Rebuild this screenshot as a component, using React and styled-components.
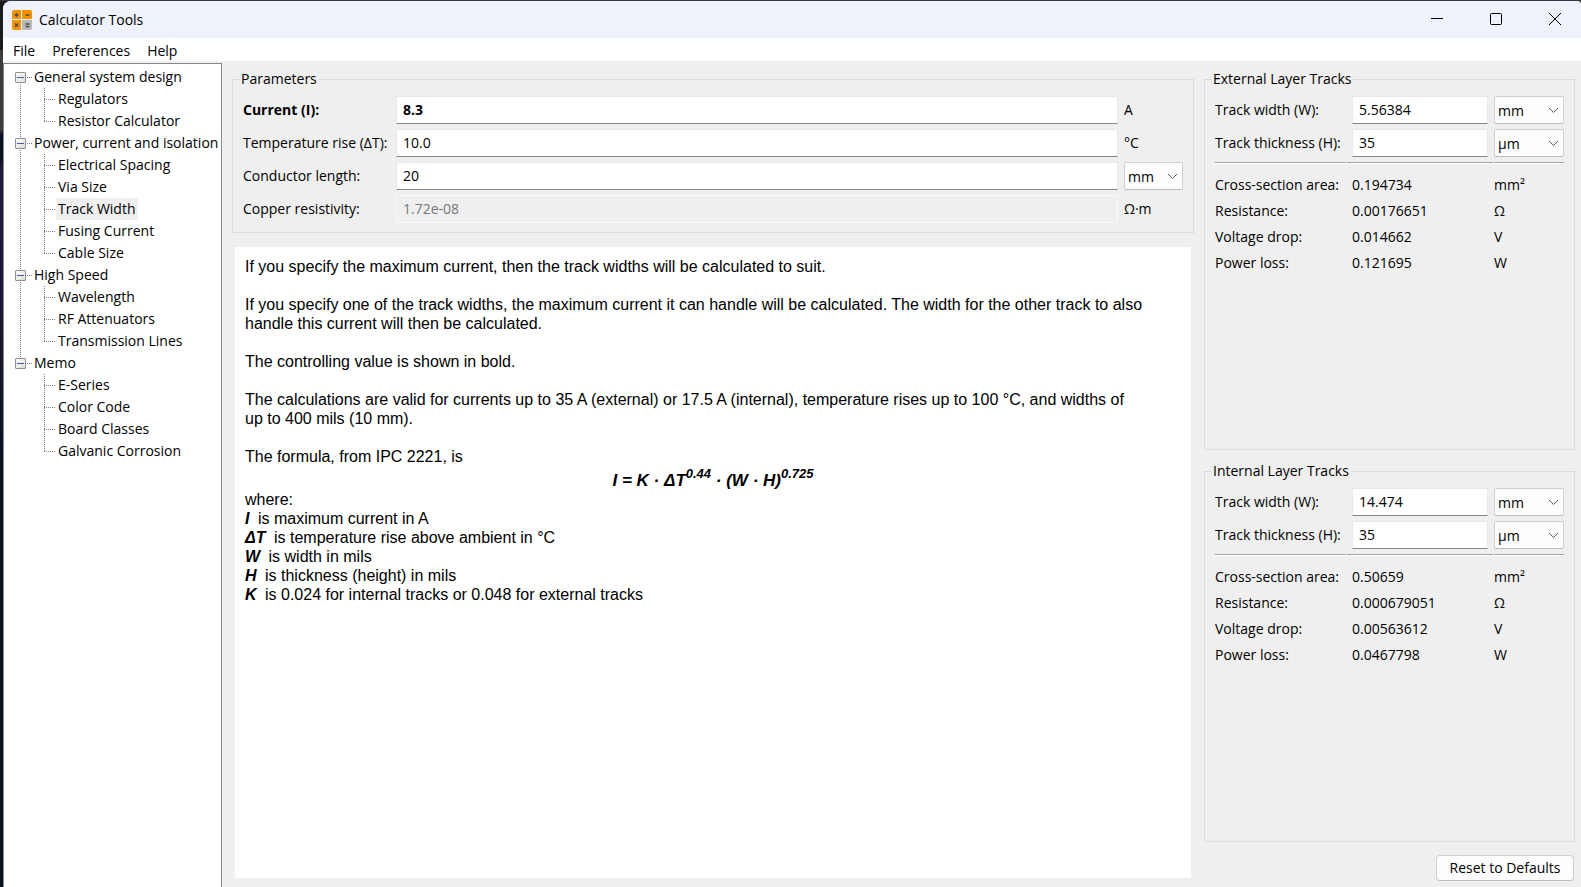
import React from "react";
import styled, { createGlobalStyle, css } from "styled-components";

const GlobalStyle = createGlobalStyle`
  *, *::before, *::after { box-sizing: border-box; }
  body { margin: 0; background: #1c1930; }
  body, input, select, button {
    font-family: "Open Sans", "Noto Sans", sans-serif;
    font-size: 14px;
    line-height: 20px;
    color: #000;
  }
`;

const Desktop = styled.div`
  min-height: 100vh;
  display: flex;
  padding: 1px 0 0 3px;
  background:
    linear-gradient(#3a373b, #3a373b) 0 0 / 100% 1px no-repeat,
    linear-gradient(#1b1b1d 0 50px, #3d3a3a 50px 130px, #0d1220 134px 160px, #211a3c 170px, #1d1836 300px, #0b1220 460px, #0b1220 100%);
`;

const Window = styled.div`
  flex: 1;
  min-width: 0;
  display: flex;
  flex-direction: column;
  background: #efefef;
  border-radius: 8px 4px 0 0;
  overflow: hidden;
`;

const TitleBar = styled.header`
  height: 37px;
  display: flex;
  align-items: center;
  background: #eff2fb;
  padding-left: 9px;
`;

const Title = styled.h1`
  flex: 1;
  margin: 0 0 0 7px;
  font-size: 14px;
  font-weight: 400;
`;

const CaptionButton = styled.button`
  width: 59px;
  height: 37px;
  padding: 0 0 2px;
  border: 0;
  background: transparent;
  display: grid;
  place-items: center;
`;

const CaptionButtons = styled.div`
  display: flex;
  margin-right: -3px;
`;

const MenuBar = styled.nav`
  height: 23px;
  display: flex;
  align-items: center;
  gap: 17px;
  padding: 2px 10px 0;
  margin-bottom: 2px;
  background: #fff;
`;

const MenuItem = styled.button`
  padding: 0;
  border: 0;
  background: transparent;
`;

const Workspace = styled.main`
  flex: 1;
  display: flex;
  gap: 10px;
  padding-right: 6px;
`;

const dots = (angle) =>
  css`repeating-linear-gradient(${angle}, #7d7d7d 0 1px, transparent 1px 2px)`;

const Tree = styled.nav`
  width: 219px;
  flex: none;
  padding-top: 2px;
  background: #fff;
  border: 1px solid #828790;
  border-bottom: 0;
  white-space: nowrap;
`;

const TreeList = styled.ul`
  list-style: none;
  margin: 0;
  padding: 0;
`;

const TreeGroup = styled.li`
  background: ${dots("180deg")} 16px 0 / 1px 100% no-repeat;
  &:first-child { background-position: 16px 12px; }
  &:last-child { background-size: 1px 12px; }
`;

const GroupRow = styled.div`
  height: 22px;
  display: flex;
  align-items: center;
  padding-left: 11px;
`;

const Toggle = styled.button`
  width: 11px;
  height: 11px;
  padding: 0;
  display: grid;
  place-items: center;
  border: 1px solid #919191;
  border-radius: 1px;
  background: linear-gradient(135deg, #fff, #dcdcdc);
  &::before {
    content: "";
    width: 7px;
    height: 1px;
    background: #3f5fa8;
  }
`;

const GroupStem = styled.span`
  width: 6px;
  height: 1px;
  margin-left: 1px;
  background: ${dots("90deg")};
`;

const GroupLabel = styled.span`
  padding-left: 1px;
`;

const TreeLeaf = styled.li`
  height: 22px;
  padding-left: 52px;
  background:
    ${dots("180deg")} 40px 0 / 1px 100% no-repeat,
    ${dots("90deg")} 40px 11px / 12px 1px no-repeat;
  &:last-child {
    background-size: 1px 12px, 12px 1px;
  }
`;

const TreeLink = styled.a`
  display: inline-block;
  padding: 0 2px;
  line-height: 22px;
  color: #000;
  text-decoration: none;
  background: ${(p) => (p.$selected ? "#efefef" : "transparent")};
`;

const Center = styled.section`
  flex: 1;
  min-width: 0;
  display: flex;
  flex-direction: column;
  gap: 14px;
  padding: 6px 0 9px;
`;

const Side = styled.aside`
  width: 371px;
  flex: none;
  display: flex;
  flex-direction: column;
  gap: 11px;
  padding: 6px 0;
`;

const Group = styled.fieldset`
  flex: ${(p) => (p.$grow ? 1 : "none")};
  min-width: 0;
  margin: 0;
  padding: 7px 10px 9px;
  border: 1px solid #dcdcdc;
`;

const GroupTitle = styled.legend`
  margin-left: -4px;
  padding: 0 2px;
`;

const FieldGrid = styled.div`
  display: grid;
  grid-template-columns: ${(p) => p.$columns};
  grid-auto-rows: 28px;
  gap: 5px 6px;
  align-items: center;
`;

const FieldLabel = styled.label`
  white-space: nowrap;
  font-weight: ${(p) => (p.$bold ? 700 : 400)};
`;

const TextField = styled.input`
  width: 100%;
  min-width: 0;
  height: 28px;
  padding: 0 6px 2px;
  outline: 0;
  background: #fff;
  border: 1px solid #e8e8e8;
  border-bottom-color: #868686;
  border-radius: 1px;
  font-weight: ${(p) => (p.$bold ? 700 : 400)};
  &:disabled {
    background: #efefef;
    color: #787878;
    border-color: #f9f9f9;
  }
`;

const SelectBox = styled.div`
  display: grid;
  align-items: center;
  & > * { grid-area: 1 / 1; }
  & > svg { justify-self: end; margin-right: 5px; pointer-events: none; }
`;

const UnitSelect = styled.select`
  appearance: none;
  width: 100%;
  height: 28px;
  padding: 2px 3px 0;
  background: #fdfdfd;
  border: 1px solid #d0d0d0;
  border-bottom-color: #bcbcbc;
  border-radius: 2px;
`;

const Rule = styled.div`
  display: grid;
  grid-template-columns: 131px 146px 1fr;
  gap: 1px;
  margin: 5px 0 8px;
`;

const RuleSegment = styled.span`
  height: 2px;
  background: #a0a0a0;
  border-bottom: 1px solid #fff;
`;

const Results = styled.table`
  width: 100%;
  table-layout: fixed;
  border-collapse: collapse;
`;

const NameCell = styled.th`
  width: 137px;
  height: 26px;
  padding: 0;
  font-weight: 400;
  text-align: left;
  white-space: nowrap;
`;

const ValueCell = styled.td`
  width: 142px;
  padding: 0;
`;

const UnitCell = styled.td`
  padding: 0;
`;

const ResetButton = styled.button`
  align-self: flex-end;
  width: 138px;
  height: 26px;
  margin: 2px 1px 0 0;
  padding: 0;
  white-space: nowrap;
  background: #fdfdfd;
  border: 1px solid #d0d0d0;
  border-bottom-color: #bcbcbc;
  border-radius: 4px;
`;

const Help = styled.article`
  flex: 1;
  margin: 0 3px;
  padding: 10px;
  background: #fff;
  font-family: "Liberation Sans", Arial, sans-serif;
  font-size: 16px;
  line-height: 19px;
`;

const Paragraph = styled.p`
  margin: 0 0 ${(p) => (p.$tight ? 0 : "19px")};
  padding-right: 20px;
`;

const Formula = styled.p`
  margin: 0;
  height: 24px;
  font-size: 17px;
  line-height: 29px;
  text-align: center;
  font-weight: 700;
  font-style: italic;
  sup { font-size: 13px; line-height: 0; vertical-align: 8px; }
`;

const Term = styled.strong`
  font-style: italic;
  margin-right: 4px;
`;

const AppIcon = () => (
  <svg width="20" height="20" viewBox="0 0 20 20" aria-hidden="true">
    <path d="M2 0h7v9H0V2a2 2 0 0 1 2-2z" fill="#f39200" />
    <path d="M10 0h8a2 2 0 0 1 2 2v7H10z" fill="#f39200" />
    <path d="M0 10h9v10H2a2 2 0 0 1-2-2z" fill="#f39200" />
    <path d="M10 10h10v8a2 2 0 0 1-2 2h-8z" fill="#b9b9b9" />
    <path d="M2.500 5h4M4.500 3v4M13.500 5h4M3 13.500l3.200 3.200M6.200 13.500L3 16.700M13.500 14h4M13.500 16.500h4" stroke="#4d4d4d" strokeWidth="1.300" fill="none" />
  </svg>
);

const Chevron = () => (
  <svg width="11" height="7" viewBox="0 0 11 7" aria-hidden="true">
    <path d="M1 1l4.500 4.500L10 1" fill="none" stroke="#5c5c5c" strokeWidth="1" />
  </svg>
);

const tree = [
  ["General system design", ["Regulators", "Resistor Calculator"]],
  [
    "Power, current and isolation",
    ["Electrical Spacing", "Via Size", "Track Width", "Fusing Current", "Cable Size"],
  ],
  ["High Speed", ["Wavelength", "RF Attenuators", "Transmission Lines"]],
  ["Memo", ["E-Series", "Color Code", "Board Classes", "Galvanic Corrosion"]],
];

const Units = ({ label, value }) => (
  <SelectBox>
    <UnitSelect aria-label={label} defaultValue={value}>
      <option>mm</option>
      <option>µm</option>
    </UnitSelect>
    <Chevron />
  </SelectBox>
);

const Layer = ({ id, title, width, results }) => (
  <Group $grow>
    <GroupTitle>{title}</GroupTitle>
    <FieldGrid $columns="131px 136px 1fr">
      <FieldLabel htmlFor={`${id}-width`}>Track width (W):</FieldLabel>
      <TextField id={`${id}-width`} defaultValue={width} />
      <Units label="Track width unit" value="mm" />
      <FieldLabel htmlFor={`${id}-thickness`}>Track thickness (H):</FieldLabel>
      <TextField id={`${id}-thickness`} defaultValue="35" />
      <Units label="Track thickness unit" value="µm" />
    </FieldGrid>
    <Rule>
      <RuleSegment />
      <RuleSegment />
      <RuleSegment />
    </Rule>
    <Results>
      <tbody>
        {results.map(([name, value, unit]) => (
          <tr key={name}>
            <NameCell scope="row">{name}</NameCell>
            <ValueCell>{value}</ValueCell>
            <UnitCell>{unit}</UnitCell>
          </tr>
        ))}
      </tbody>
    </Results>
  </Group>
);

export default function App() {
  return (
    <Desktop>
      <GlobalStyle />
      <Window>
        <TitleBar>
          <AppIcon />
          <Title>Calculator Tools</Title>
          <CaptionButtons>
            <CaptionButton aria-label="Minimize">
              <svg width="12" height="12" viewBox="0 0 12 12">
                <path d="M0 5.500h12" stroke="#000" />
              </svg>
            </CaptionButton>
            <CaptionButton aria-label="Maximize">
              <svg width="12" height="12" viewBox="0 0 12 12">
                <rect x="0.500" y="0.500" width="11" height="11" rx="1" fill="none" stroke="#000" />
              </svg>
            </CaptionButton>
            <CaptionButton aria-label="Close">
              <svg width="12" height="12" viewBox="0 0 12 12">
                <path d="M0 0l12 12M12 0L0 12" stroke="#000" />
              </svg>
            </CaptionButton>
          </CaptionButtons>
        </TitleBar>
        <MenuBar>
          <MenuItem>File</MenuItem>
          <MenuItem>Preferences</MenuItem>
          <MenuItem>Help</MenuItem>
        </MenuBar>
        <Workspace>
          <Tree aria-label="Calculators">
            <TreeList>
              {tree.map(([group, items]) => (
                <TreeGroup key={group}>
                  <GroupRow>
                    <Toggle aria-label={`Collapse ${group}`} />
                    <GroupStem />
                    <GroupLabel>{group}</GroupLabel>
                  </GroupRow>
                  <TreeList>
                    {items.map((item) => (
                      <TreeLeaf key={item}>
                        <TreeLink href="#" $selected={item === "Track Width"}>
                          {item}
                        </TreeLink>
                      </TreeLeaf>
                    ))}
                  </TreeList>
                </TreeGroup>
              ))}
            </TreeList>
          </Tree>
          <Center>
            <Group>
              <GroupTitle>Parameters</GroupTitle>
              <FieldGrid $columns="147px 1fr 59px">
                <FieldLabel htmlFor="current" $bold>Current (I):</FieldLabel>
                <TextField id="current" defaultValue="8.3" $bold />
                <span>A</span>
                <FieldLabel htmlFor="rise">Temperature rise (ΔT):</FieldLabel>
                <TextField id="rise" defaultValue="10.0" />
                <span>°C</span>
                <FieldLabel htmlFor="length">Conductor length:</FieldLabel>
                <TextField id="length" defaultValue="20" />
                <Units label="Conductor length unit" value="mm" />
                <FieldLabel htmlFor="resistivity">Copper resistivity:</FieldLabel>
                <TextField id="resistivity" defaultValue="1.72e-08" disabled />
                <span>Ω·m</span>
              </FieldGrid>
            </Group>
            <Help>
              <Paragraph>
                If you specify the maximum current, then the track widths will be calculated to suit.
              </Paragraph>
              <Paragraph>
                If you specify one of the track widths, the maximum current it can handle will be
                calculated. The width for the other track to also handle this current will then be
                calculated.
              </Paragraph>
              <Paragraph>The controlling value is shown in bold.</Paragraph>
              <Paragraph>
                The calculations are valid for currents up to 35 A (external) or 17.5 A (internal),
                temperature rises up to 100 °C, and widths of up&nbsp;to 400 mils (10 mm).
              </Paragraph>
              <Paragraph $tight>The formula, from IPC 2221, is</Paragraph>
              <Formula>
                I = K · ΔT<sup>0.44</sup> · (W · H)<sup>0.725</sup>
              </Formula>
              <Paragraph $tight>where:</Paragraph>
              <Paragraph $tight><Term>I</Term> is maximum current in A</Paragraph>
              <Paragraph $tight><Term>ΔT</Term> is temperature rise above ambient in °C</Paragraph>
              <Paragraph $tight><Term>W</Term> is width in mils</Paragraph>
              <Paragraph $tight><Term>H</Term> is thickness (height) in mils</Paragraph>
              <Paragraph $tight>
                <Term>K</Term> is 0.024 for internal tracks or 0.048 for external tracks
              </Paragraph>
            </Help>
          </Center>
          <Side>
            <Layer
              id="external"
              title="External Layer Tracks"
              width="5.56384"
              results={[
                ["Cross-section area:", "0.194734", "mm²"],
                ["Resistance:", "0.00176651", "Ω"],
                ["Voltage drop:", "0.014662", "V"],
                ["Power loss:", "0.121695", "W"],
              ]}
            />
            <Layer
              id="internal"
              title="Internal Layer Tracks"
              width="14.474"
              results={[
                ["Cross-section area:", "0.50659", "mm²"],
                ["Resistance:", "0.000679051", "Ω"],
                ["Voltage drop:", "0.00563612", "V"],
                ["Power loss:", "0.0467798", "W"],
              ]}
            />
            <ResetButton>Reset to Defaults</ResetButton>
          </Side>
        </Workspace>
      </Window>
    </Desktop>
  );
}
